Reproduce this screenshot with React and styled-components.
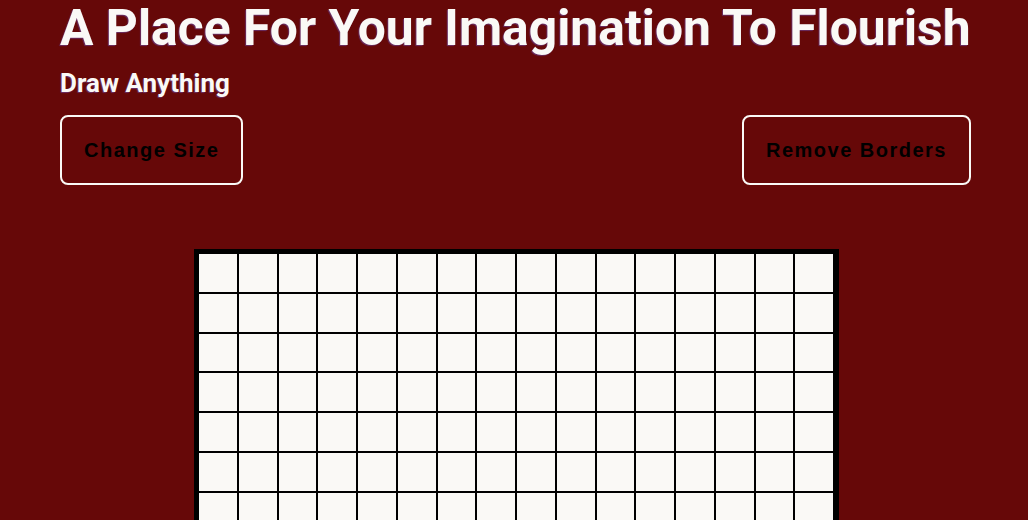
import React from "react";
import styled, { createGlobalStyle } from "styled-components";

const Global = createGlobalStyle`
  html, body { margin: 0; padding: 0; }
  body {
    background: #660808;
    font-family: Roboto, "Liberation Sans", sans-serif;
    overflow: hidden;
  }
`;

const Page = styled.main`
  display: flex;
  flex-direction: column;
  padding: 0 57px 0 60px;
`;

const Title = styled.h1`
  margin: 0;
  font-family: Roboto, sans-serif;
  font-weight: 700;
  font-size: 49.8px;
  line-height: 56px;
  color: #faf9f6;
  white-space: nowrap;
  text-shadow: -1px 1px 1px rgba(110, 110, 255, 0.38);
`;

const Subtitle = styled.h2`
  margin: 12px 0 0;
  font-family: Roboto, sans-serif;
  font-weight: 700;
  font-size: 26px;
  line-height: 30px;
  color: #faf9f6;
  text-shadow: -1px 1px 1px rgba(110, 110, 255, 0.38);
`;

const Toolbar = styled.div`
  display: flex;
  justify-content: space-between;
  margin-top: 17px;
`;

const Button = styled.button`
  box-sizing: border-box;
  height: 70px;
  padding: 0 22px;
  background: transparent;
  border: 2px solid #faf9f6;
  border-radius: 8px;
  font-family: "Liberation Sans", Arial, sans-serif;
  font-weight: 700;
  font-size: 20px;
  letter-spacing: 1.5px;
  color: #000;
  cursor: pointer;
`;

const Board = styled.div`
  align-self: center;
  margin-top: 64px;
  margin-left: 2px;
  box-sizing: border-box;
  width: 645px;
  border: 4px solid #000;
  border-right-width: 5px;
  display: grid;
  grid-template-columns: repeat(16, 1fr);
`;

const Cell = styled.div`
  box-sizing: border-box;
  aspect-ratio: 1 / 1;
  background: #faf9f6;
  border: 1px solid #000;
`;

export default function App() {
  const cells = Array.from({ length: 16 * 16 }, (_, i) => i);
  return (
    <>
      <Global />
      <Page>
        <Title>A Place For Your Imagination To Flourish</Title>
        <Subtitle>Draw Anything</Subtitle>
        <Toolbar>
          <Button>Change Size</Button>
          <Button>Remove Borders</Button>
        </Toolbar>
        <Board>
          {cells.map((i) => (
            <Cell key={i} />
          ))}
        </Board>
      </Page>
    </>
  );
}
